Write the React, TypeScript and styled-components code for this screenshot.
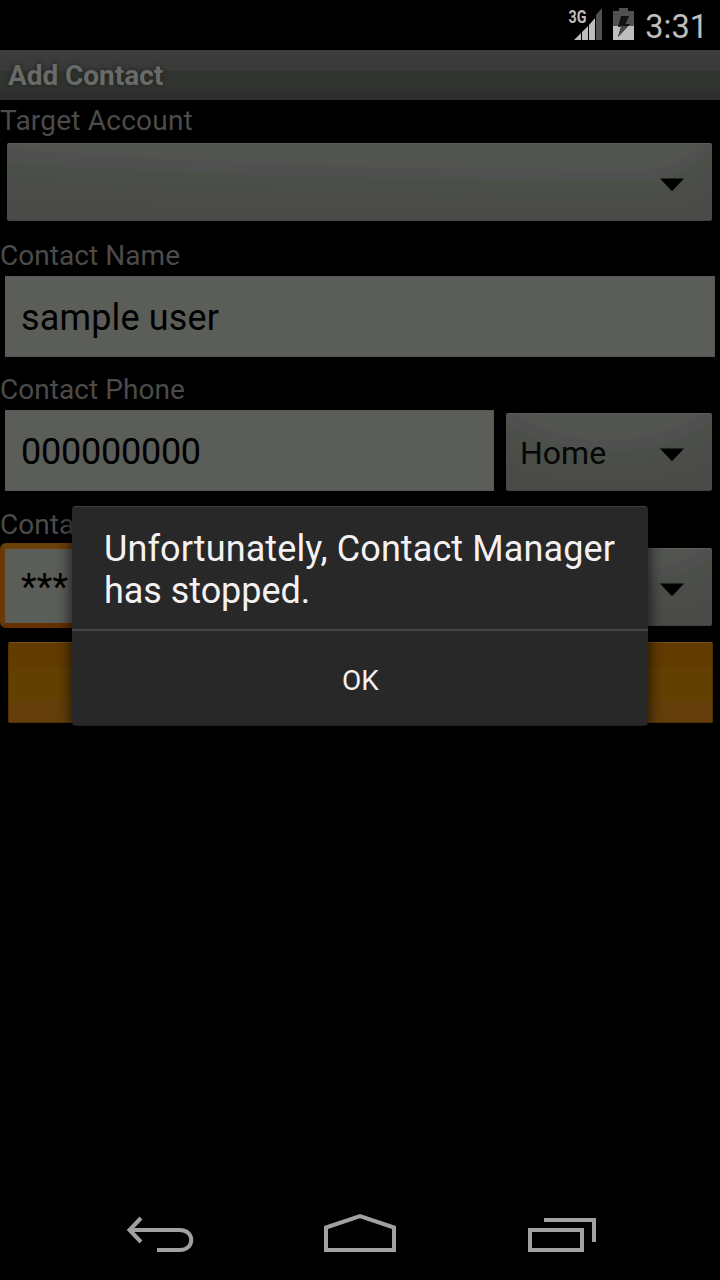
import React from "react";
import styled, { createGlobalStyle } from "styled-components";

const GlobalStyle = createGlobalStyle`
  * { box-sizing: border-box; }
  body { margin: 0; background: #000; font-family: Roboto, "Liberation Sans", sans-serif; }
`;

const Screen = styled.div`
  position: relative;
  display: flex;
  flex-direction: column;
  width: 720px;
  height: 1280px;
  overflow: hidden;
  background: #000;
`;

const StatusBar = styled.header`
  display: flex;
  align-items: flex-start;
  justify-content: flex-end;
  height: 50px;
  padding-right: 12px;
`;

const Clock = styled.time`
  margin-left: 9px;
  font-size: 32.5px;
  line-height: 54px;
  color: #bebebe;
`;

const TitleBar = styled.h1`
  height: 50px;
  margin: 0;
  padding-left: 8px;
  font-size: 28px;
  font-weight: 700;
  line-height: 51px;
  letter-spacing: -0.05px;
  color: #696b69;
  background: linear-gradient(#3c3d3b 0, #3a3a3a 40%, #323430 43%, #323431 80%, #2e2e2e 84%, #2e2e2e 100%);
  text-shadow: 0 0 5px #1c1e1a;
`;

const Form = styled.main`
  display: flex;
  flex: 1;
  flex-direction: column;
`;

const Field = styled.section<{ $height: number }>`
  height: ${(p) => p.$height}px;
`;

const Label = styled.div<{ $spacing?: number }>`
  height: 40px;
  font-size: 28px;
  line-height: 41px;
  letter-spacing: ${(p) => p.$spacing ?? 0.06}px;
  color: #4b4b4b;
`;

const Row = styled.div`
  display: flex;
  align-items: flex-start;
`;

const Input = styled.div<{ $wide?: boolean }>`
  width: ${(p) => (p.$wide ? 710 : 489)}px;
  height: 81px;
  margin: 1px 0 0 5px;
  padding-left: 16px;
  border: 1px solid #545454;
  border-left-width: 0;
  background: #5b5d59;
  font-size: 36px;
  line-height: 82px;
  letter-spacing: ${(p) => (p.$wide ? 0.15 : -0.25)}px;
  color: #000;
`;

const FocusedInput = styled.div`
  width: 500px;
  height: 85px;
  margin-top: -1px;
  padding-left: 16px;
  border-style: solid;
  border-width: 6px 5px 5px;
  border-color: #6c4009 #6a3905 #653000;
  border-radius: 6px;
  background: #5b5d59;
  font-size: 36px;
  line-height: 76px;
  letter-spacing: 0.3px;
  color: #000;
`;

const sheen = "#545652 0, #525450 88%, #505050 92%, #505050 99%, #4a5048 106%, #4a4f49 114%, #4b4d49 122%, #4a4b48 150%";

const Spinner = styled.div<{ $left: number }>`
  display: flex;
  align-items: center;
  justify-content: space-between;
  width: 206px;
  height: 78px;
  margin: 4px 0 0 ${(p) => p.$left}px;
  padding: 4px 28px 0 14px;
  border-radius: 2px;
  border-top: 1px solid #5c5e5a;
  border-bottom: 1px solid #424341;
  background: radial-gradient(ellipse 64% 105% at 50% -60%, ${sheen});
  font-size: 32px;
  line-height: 36px;
  color: #060606;
`;

const Choice = styled.span`
  padding-bottom: 3px;
`;

const WideSpinner = styled(Spinner)`
  width: 705px;
  margin-top: 3px;
  background:
    radial-gradient(ellipse 154% 105% at 100% -60%, ${sheen}) left / 90% 100% no-repeat,
    radial-gradient(ellipse 122% 105% at 0 -60%, ${sheen}) right / 10.1% 100% no-repeat;
`;

const SaveButton = styled.div`
  width: 705px;
  height: 81px;
  margin: 4px 0 0 8px;
  border: 1px solid #553300;
  border-top-color: #785017;
  border-radius: 2px;
  background: linear-gradient(#623b00 0, #623c00 30%, #624100 36%, #624100 70%, #643f0b 76%, #643f0b 100%);
`;

const Dialog = styled.div`
  position: absolute;
  top: 506px;
  left: 72px;
  width: 576px;
  height: 220px;
  border-radius: 4px;
  border-top: 1px solid #414141;
  border-bottom: 1px solid #202020;
  background: #282828;
  box-shadow: 0 2px 14px 2px rgba(0, 0, 0, 0.65);
`;

const Message = styled.div`
  height: 124px;
  padding: 21px 0 0 32px;
  border-bottom: 2px solid #444;
  font-size: 36px;
  line-height: 42px;
  color: #f5f1f3;
`;

const MessageLine = styled.div<{ $spacing: number }>`
  white-space: nowrap;
  letter-spacing: ${(p) => p.$spacing}px;
`;

const OkButton = styled.div`
  height: 95px;
  padding-left: 1px;
  font-size: 28px;
  line-height: 100px;
  text-align: center;
  color: #f5f1f3;
`;

const NavBar = styled.footer`
  display: flex;
  height: 96px;
`;

const NavIcons = styled.svg`
  display: block;
  fill: none;
  stroke: #a2a0a2;
  stroke-width: 4;
`;

const NetworkLabel = styled.text`
  font: 700 18.5px Roboto, sans-serif;
  fill: #bebebe;
`;

const Arrow = () => (
  <svg width="24" height="13" viewBox="0 0 24 13">
    <path d="M0 0.500H24L12.800 12.500Q12 13 11.200 12.500Z" fill="#000" />
  </svg>
);

export default function App() {
  return (
    <>
      <GlobalStyle />
      <Screen>
        <StatusBar>
          <svg width="70" height="50" viewBox="566 0 70 50">
            <NetworkLabel x="568.5" y="23" textLength="18" lengthAdjust="spacingAndGlyphs">3G</NetworkLabel>
            <path d="M574 40L581 33V40ZM582 32L588 26V40H582ZM589 25L595 18V40H589Z" fill="#bebebe" />
            <path d="M596 15L602 8V40H596Z" fill="#505250" />
            <path d="M613 11H619V8H628V11H634V26H613Z" fill="#505250" />
            <path d="M613 26H634V40H613Z" fill="#bebebe" />
            <path d="M621 16H629L625.500 24H630L618 37L621 27H618Z" fill="#101410" />
            <path d="M619.4 26H628.2L618 37L621 27H619.1Z" fill="#454845" />
          </svg>
          <Clock>3:31</Clock>
        </StatusBar>
        <TitleBar>Add Contact</TitleBar>
        <Form>
          <Field $height={135}>
            <Label $spacing={0.22}>Target Account</Label>
            <Row>
              <WideSpinner $left={7}>
                <span />
                <Arrow />
              </WideSpinner>
            </Row>
          </Field>
          <Field $height={134}>
            <Label>Contact Name</Label>
            <Row>
              <Input $wide>sample user</Input>
            </Row>
          </Field>
          <Field $height={135}>
            <Label>Contact Phone</Label>
            <Row>
              <Input>000000000</Input>
              <Spinner $left={12}>
                <Choice>Home</Choice>
                <Arrow />
              </Spinner>
            </Row>
          </Field>
          <Field $height={134}>
            <Label>Conta</Label>
            <Row>
              <FocusedInput>***</FocusedInput>
              <Spinner $left={6}>
                <span />
                <Arrow />
              </Spinner>
            </Row>
          </Field>
          <SaveButton />
        </Form>
        <NavBar>
          <NavIcons width="720" height="96" viewBox="0 1184 720 96">
            <path d="M129 1230H180C195 1230 195 1250 180 1250H157M141 1218L129.500 1230L141 1242" />
            <path d="M326 1250V1227.500L360 1216L394 1227.500V1250Z" />
            <path d="M530 1230H582V1250H530ZM544 1220H594V1242" />
          </NavIcons>
        </NavBar>
        <Dialog>
          <Message>
            <MessageLine $spacing={0.1}>Unfortunately, Contact Manager</MessageLine>
            <MessageLine $spacing={-0.05}>has stopped.</MessageLine>
          </Message>
          <OkButton>OK</OkButton>
        </Dialog>
      </Screen>
    </>
  );
}
